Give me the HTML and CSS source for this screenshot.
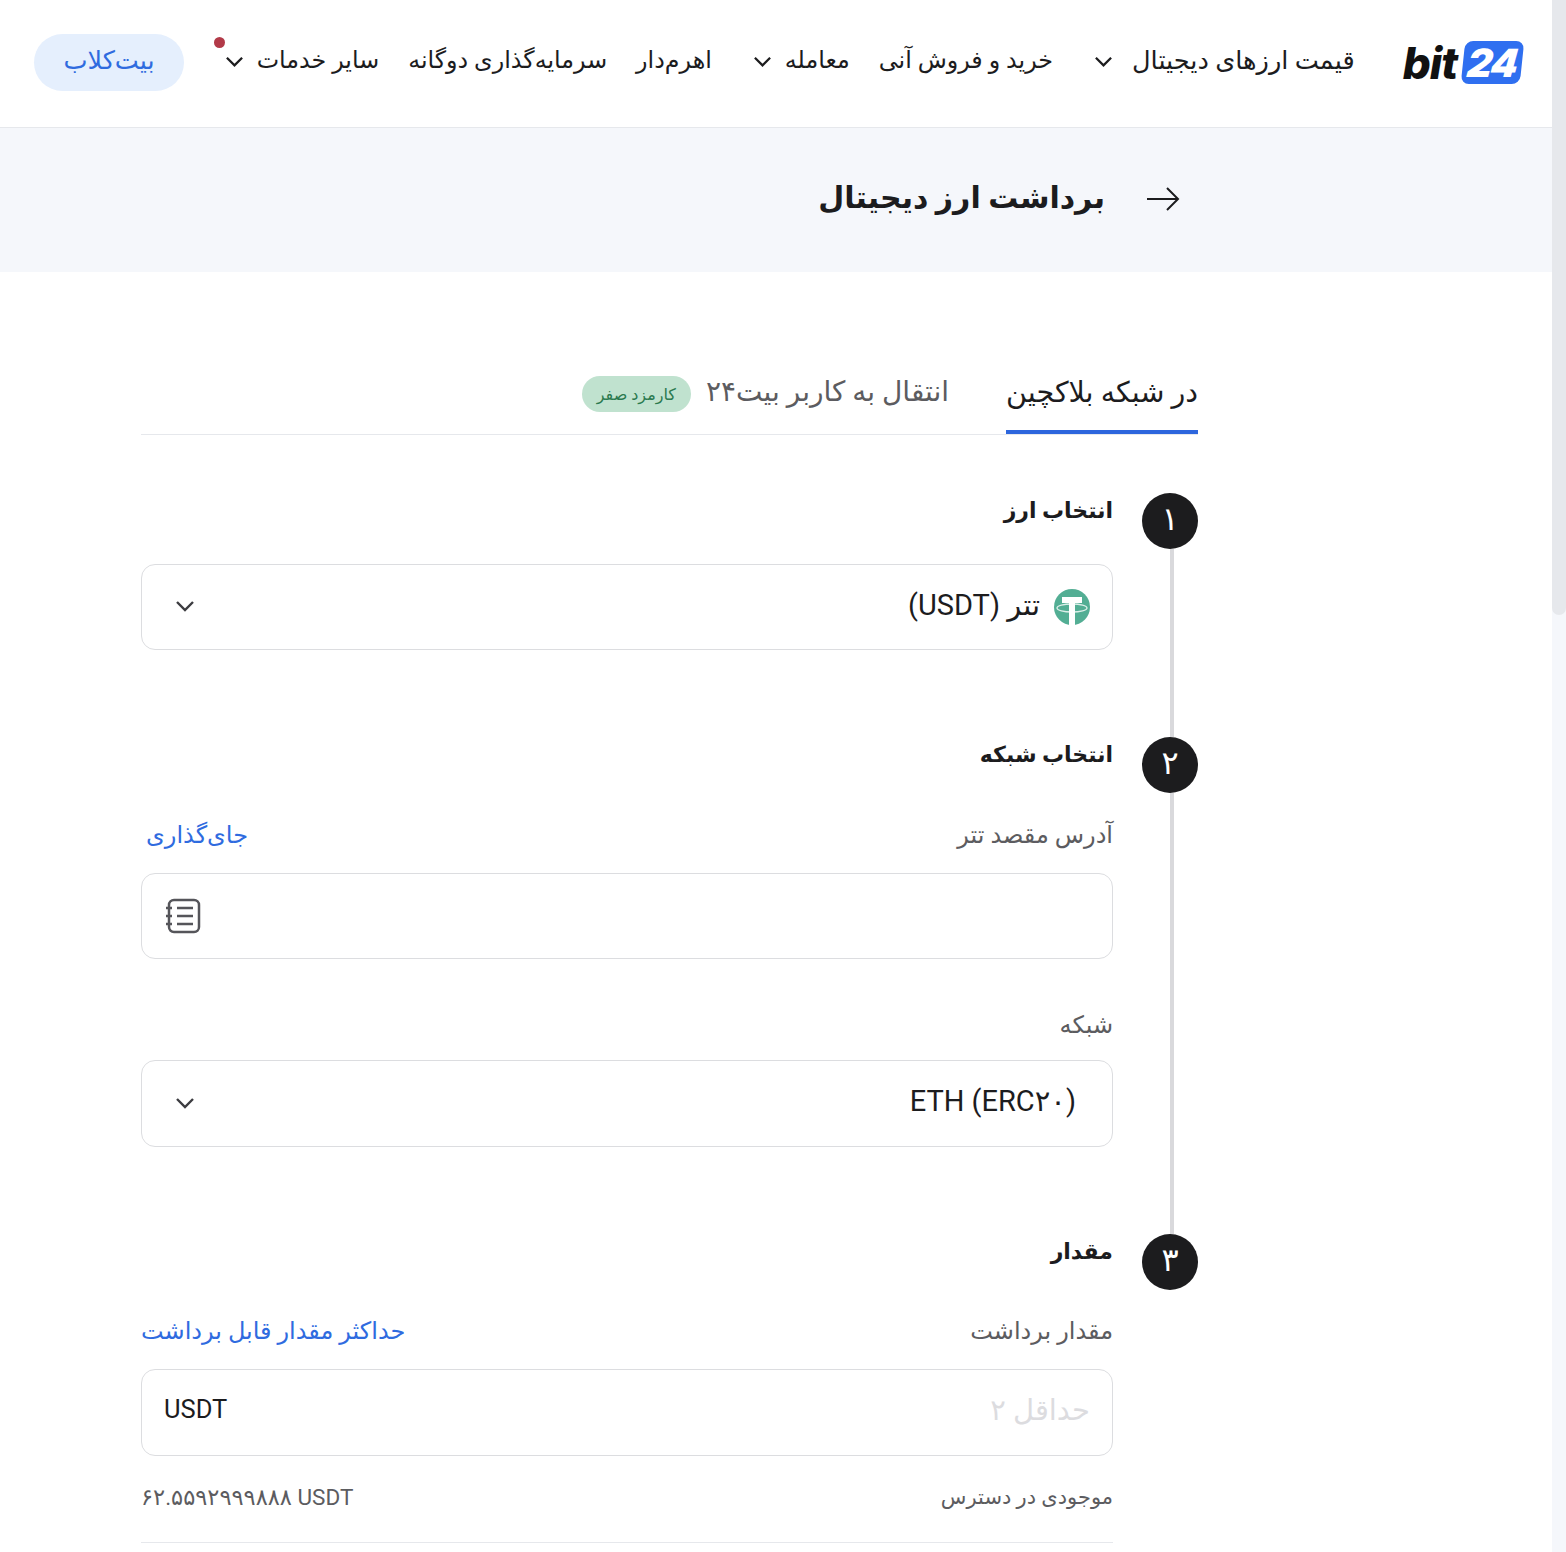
FILE: index.html
```html
<!DOCTYPE html>
<html lang="fa" dir="rtl">
<head>
    <meta charset="UTF-8">
    <title>برداشت ارز دیجیتال</title>
    <link rel="stylesheet" href="styles.css">
</head>
<body>
    <div class="page">
        <header class="topbar">
            <a class="logo" dir="ltr"><span class="logo-bit">bit</span><span class="logo-box"><span class="logo-num">24</span></span></a>
            <nav class="nav">
                <a class="nav-item nav-item-wide">قیمت ارزهای دیجیتال <svg class="chev" viewBox="0 0 20 20"><path d="M2 6l8 8 8-8"/></svg></a>
                <a class="nav-item">خرید و فروش آنی</a>
                <a class="nav-item">معامله <svg class="chev" viewBox="0 0 20 20"><path d="M2 6l8 8 8-8"/></svg></a>
                <a class="nav-item">اهرم‌دار</a>
                <a class="nav-item">سرمایه‌گذاری دوگانه</a>
                <a class="nav-item">سایر خدمات <svg class="chev" viewBox="0 0 20 20"><path d="M2 6l8 8 8-8"/></svg><span class="dot"></span></a>
            </nav>
            <a class="club-btn">بیت‌کلاب</a>
        </header>

        <div class="title-band">
            <svg class="back" viewBox="0 0 34 26"><path d="M1 13h31M21 2l11 11-11 11"/></svg>
            <h1>برداشت ارز دیجیتال</h1>
        </div>

        <main class="content">
            <div class="tabs">
                <div class="tab active">در شبکه بلاکچین</div>
                <div class="tab">انتقال به کاربر بیت۲۴ <span class="badge">کارمزد صفر</span></div>
            </div>

            <section class="step">
                <div class="rail"><div class="num">۱</div><div class="line"></div></div>
                <div class="step-body">
                    <h2>انتخاب ارز</h2>
                    <div class="field">
                        <span class="value">
                            <svg class="coin" viewBox="0 0 36 36">
                                <circle cx="18" cy="18" r="18" fill="#53ae94"/>
                                <path d="M8 8h20v6h-7v22h-6V14H8z" fill="#fff"/>
                                <ellipse cx="18" cy="19" rx="15" ry="4" fill="none" stroke="#fff" stroke-opacity=".8" stroke-width="1.3"/>
                            </svg>
                            <span class="value-text">تتر (USDT)</span>
                        </span>
                        <svg class="chev chev-field" viewBox="0 0 20 20"><path d="M2 6l8 8 8-8"/></svg>
                    </div>
                </div>
            </section>

            <section class="step">
                <div class="rail"><div class="num">۲</div><div class="line"></div></div>
                <div class="step-body">
                    <h2>انتخاب شبکه</h2>
                    <div class="label-row">
                        <span>آدرس مقصد تتر</span>
                        <a class="link link-paste">جای‌گذاری</a>
                    </div>
                    <div class="field field-end">
                        <svg class="book" viewBox="0 0 36 36">
                            <rect x="4" y="2" width="30" height="32" rx="5"/>
                            <path d="M12 10h16M12 18h16M12 26h16M1 10h6M1 18h6M1 26h6"/>
                        </svg>
                    </div>
                    <div class="label-row label-net"><span>شبکه</span></div>
                    <div class="field field-net">
                        <span class="value value-net" dir="ltr"><span class="value-text">ETH (ERC۲۰)</span></span>
                        <svg class="chev chev-field" viewBox="0 0 20 20"><path d="M2 6l8 8 8-8"/></svg>
                    </div>
                </div>
            </section>

            <section class="step step-last">
                <div class="rail"><div class="num">۳</div></div>
                <div class="step-body">
                    <h2>مقدار</h2>
                    <div class="label-row">
                        <span>مقدار برداشت</span>
                        <a class="link">حداکثر مقدار قابل برداشت</a>
                    </div>
                    <div class="field field-amount">
                        <span class="placeholder">حداقل ۲</span>
                        <span class="unit">USDT</span>
                    </div>
                    <div class="balance">
                        <span class="balance-label">موجودی در دسترس</span>
                        <span dir="ltr">۶۲.۵۵۹۲۹۹۹۸۸۸ USDT</span>
                    </div>
                    <div class="divider"></div>
                </div>
            </section>
        </main>
    </div>

    <div class="scrollbar"><div class="thumb"></div></div>
</body>
</html>
```

FILE: styles.css
```css
* {
    margin: 0;
    padding: 0;
    box-sizing: border-box;
}

html, body {
    height: 100%;
    overflow: hidden;
}

body {
    font-family: Roboto, "Noto Sans", "DejaVu Sans", sans-serif;
    background: #fff;
    color: #1c1c1e;
}

.page {
    width: 1552px;
    margin-right: 14px;
}

.topbar {
    height: 128px;
    border-bottom: 1px solid #e6e8ec;
    display: flex;
    align-items: center;
    padding: 0 30px 2px 34px;
}

.logo {
    display: flex;
    align-items: center;
    margin-left: 48px;
}

.logo-bit {
    font-family: Inter, sans-serif;
    font-weight: 800;
    font-style: italic;
    font-size: 44px;
    letter-spacing: -1px;
    color: #111;
}

.logo-box {
    width: 59px;
    height: 43px;
    margin-left: 6px;
    background: #2f6ff0;
    border-radius: 8px;
    transform: skewX(-6deg);
    display: flex;
    align-items: center;
    justify-content: center;
}

.logo-num {
    font-family: Inter, sans-serif;
    font-weight: 900;
    font-style: italic;
    font-size: 39px;
    letter-spacing: -1px;
    color: #fff;
}

.nav {
    display: flex;
    align-items: center;
    gap: 29px;
    padding-bottom: 5px;
}

.nav-item {
    position: relative;
    display: flex;
    align-items: center;
    gap: 13px;
    font-size: 23.8px;
    white-space: nowrap;
}

.nav-item-wide {
    font-size: 25.6px;
    gap: 19px;
}

.chev {
    width: 19px;
    height: 19px;
    margin-top: 3px;
    margin-left: 12px;
    fill: none;
    stroke: #1c1c1e;
    stroke-width: 2.4;
}

.dot {
    position: absolute;
    left: 1px;
    top: -9px;
    width: 11px;
    height: 11px;
    border-radius: 50%;
    background: #b23a48;
}

.club-btn {
    margin-right: auto;
    width: 150px;
    height: 57px;
    border-radius: 29px;
    background: #e5effd;
    color: #2f6bdf;
    font-size: 25.5px;
    display: flex;
    align-items: center;
    justify-content: center;
    padding-bottom: 5px;
}

.title-band {
    height: 144px;
    background: #f5f7fb;
    display: flex;
    align-items: center;
    padding: 0 372px 2px 0;
    gap: 41px;
}

.back {
    width: 34px;
    height: 26px;
    fill: none;
    stroke: #1c1c1e;
    stroke-width: 2;
}

.title-band h1 {
    font-size: 30px;
    font-weight: 700;
    padding-bottom: 3px;
}

.content {
    width: 1057px;
    margin-right: 354px;
    margin-left: 141px;
    padding-top: 90px;
}

.tabs {
    display: flex;
    height: 73px;
    border-bottom: 1px solid #e6e8ec;
    gap: 57px;
    margin-bottom: 58px;
}

.tab {
    display: flex;
    align-items: flex-start;
    gap: 15px;
    padding-top: 13px;
    font-size: 28px;
    color: #5c5c60;
    height: 72px;
    white-space: nowrap;
}

.tab.active {
    font-size: 28.6px;
    color: #1c1c1e;
    border-bottom: 4px solid #2d66dd;
}

.badge {
    height: 36px;
    padding: 0 15px;
    border-radius: 18px;
    background: #c0e2cf;
    color: #2b7a4f;
    font-size: 16px;
    display: flex;
    align-items: center;
    margin-top: 1px;
}

.step {
    display: flex;
    gap: 29px;
}

.rail {
    width: 56px;
    flex-shrink: 0;
    display: flex;
    flex-direction: column;
    align-items: center;
}

.num {
    width: 56px;
    height: 56px;
    border-radius: 50%;
    background: #1c1c1e;
    color: #fff;
    font-size: 32px;
    display: flex;
    align-items: center;
    justify-content: center;
    padding-bottom: 5px;
}

.line {
    flex: 1;
    width: 4px;
    margin-right: -3px;
    background: #d9d9dc;
}

.step-body {
    flex: 1;
    padding-bottom: 87px;
}

.step-last .step-body {
    padding-bottom: 0;
}

.step-body h2 {
    font-size: 22px;
    font-weight: 700;
    line-height: 36px;
    margin-bottom: 35px;
}

.label-row {
    display: flex;
    justify-content: space-between;
    align-items: center;
    height: 36px;
    margin-bottom: 20px;
    font-size: 24px;
    color: #5c5c60;
}

.step-body h2 + .label-row {
    margin-top: 44px;
}

.step-last .step-body h2 + .label-row {
    margin-top: 43px;
}

.label-net {
    margin-top: 48px;
    margin-bottom: 17px;
}

.link {
    color: #2f6bdf;
}

.link-paste {
    margin-left: 5px;
}

.field {
    height: 86px;
    border: 1px solid #dcdde0;
    border-radius: 14px;
    display: flex;
    align-items: center;
    justify-content: space-between;
    padding: 0 22px;
}

.field-end {
    justify-content: flex-end;
}

.field-net {
    height: 87px;
}

.field-amount {
    height: 87px;
}

.value {
    display: flex;
    align-items: center;
    gap: 14px;
    font-size: 29px;
}

.value-text {
    padding-bottom: 5px;
}

.value-net {
    padding-right: 14px;
}

.coin {
    width: 36px;
    height: 36px;
}

.chev-field {
    width: 20px;
    height: 20px;
    margin-top: -2px;
    margin-left: 11px;
    stroke: #3c3c40;
}

.book {
    width: 36px;
    height: 36px;
    margin-left: 1px;
    fill: none;
    stroke: #55555a;
    stroke-width: 2.5;
}

.placeholder {
    font-size: 29px;
    color: #dcdcdf;
    padding-bottom: 5px;
}

.unit {
    font-size: 25.5px;
    padding-bottom: 8px;
}

.balance {
    display: flex;
    justify-content: space-between;
    align-items: center;
    height: 36px;
    margin-top: 23px;
    font-size: 22.5px;
    color: #5c5c60;
}

.balance-label {
    font-size: 21px;
}

.divider {
    height: 1px;
    background: #e6e8ec;
    margin-top: 27px;
}

.scrollbar {
    position: absolute;
    top: 0;
    right: 0;
    bottom: 0;
    width: 14px;
    background: #f5f7fb;
}

.thumb {
    height: 615px;
    background: #e6e8ec;
    border-radius: 0 0 7px 7px;
}
```
